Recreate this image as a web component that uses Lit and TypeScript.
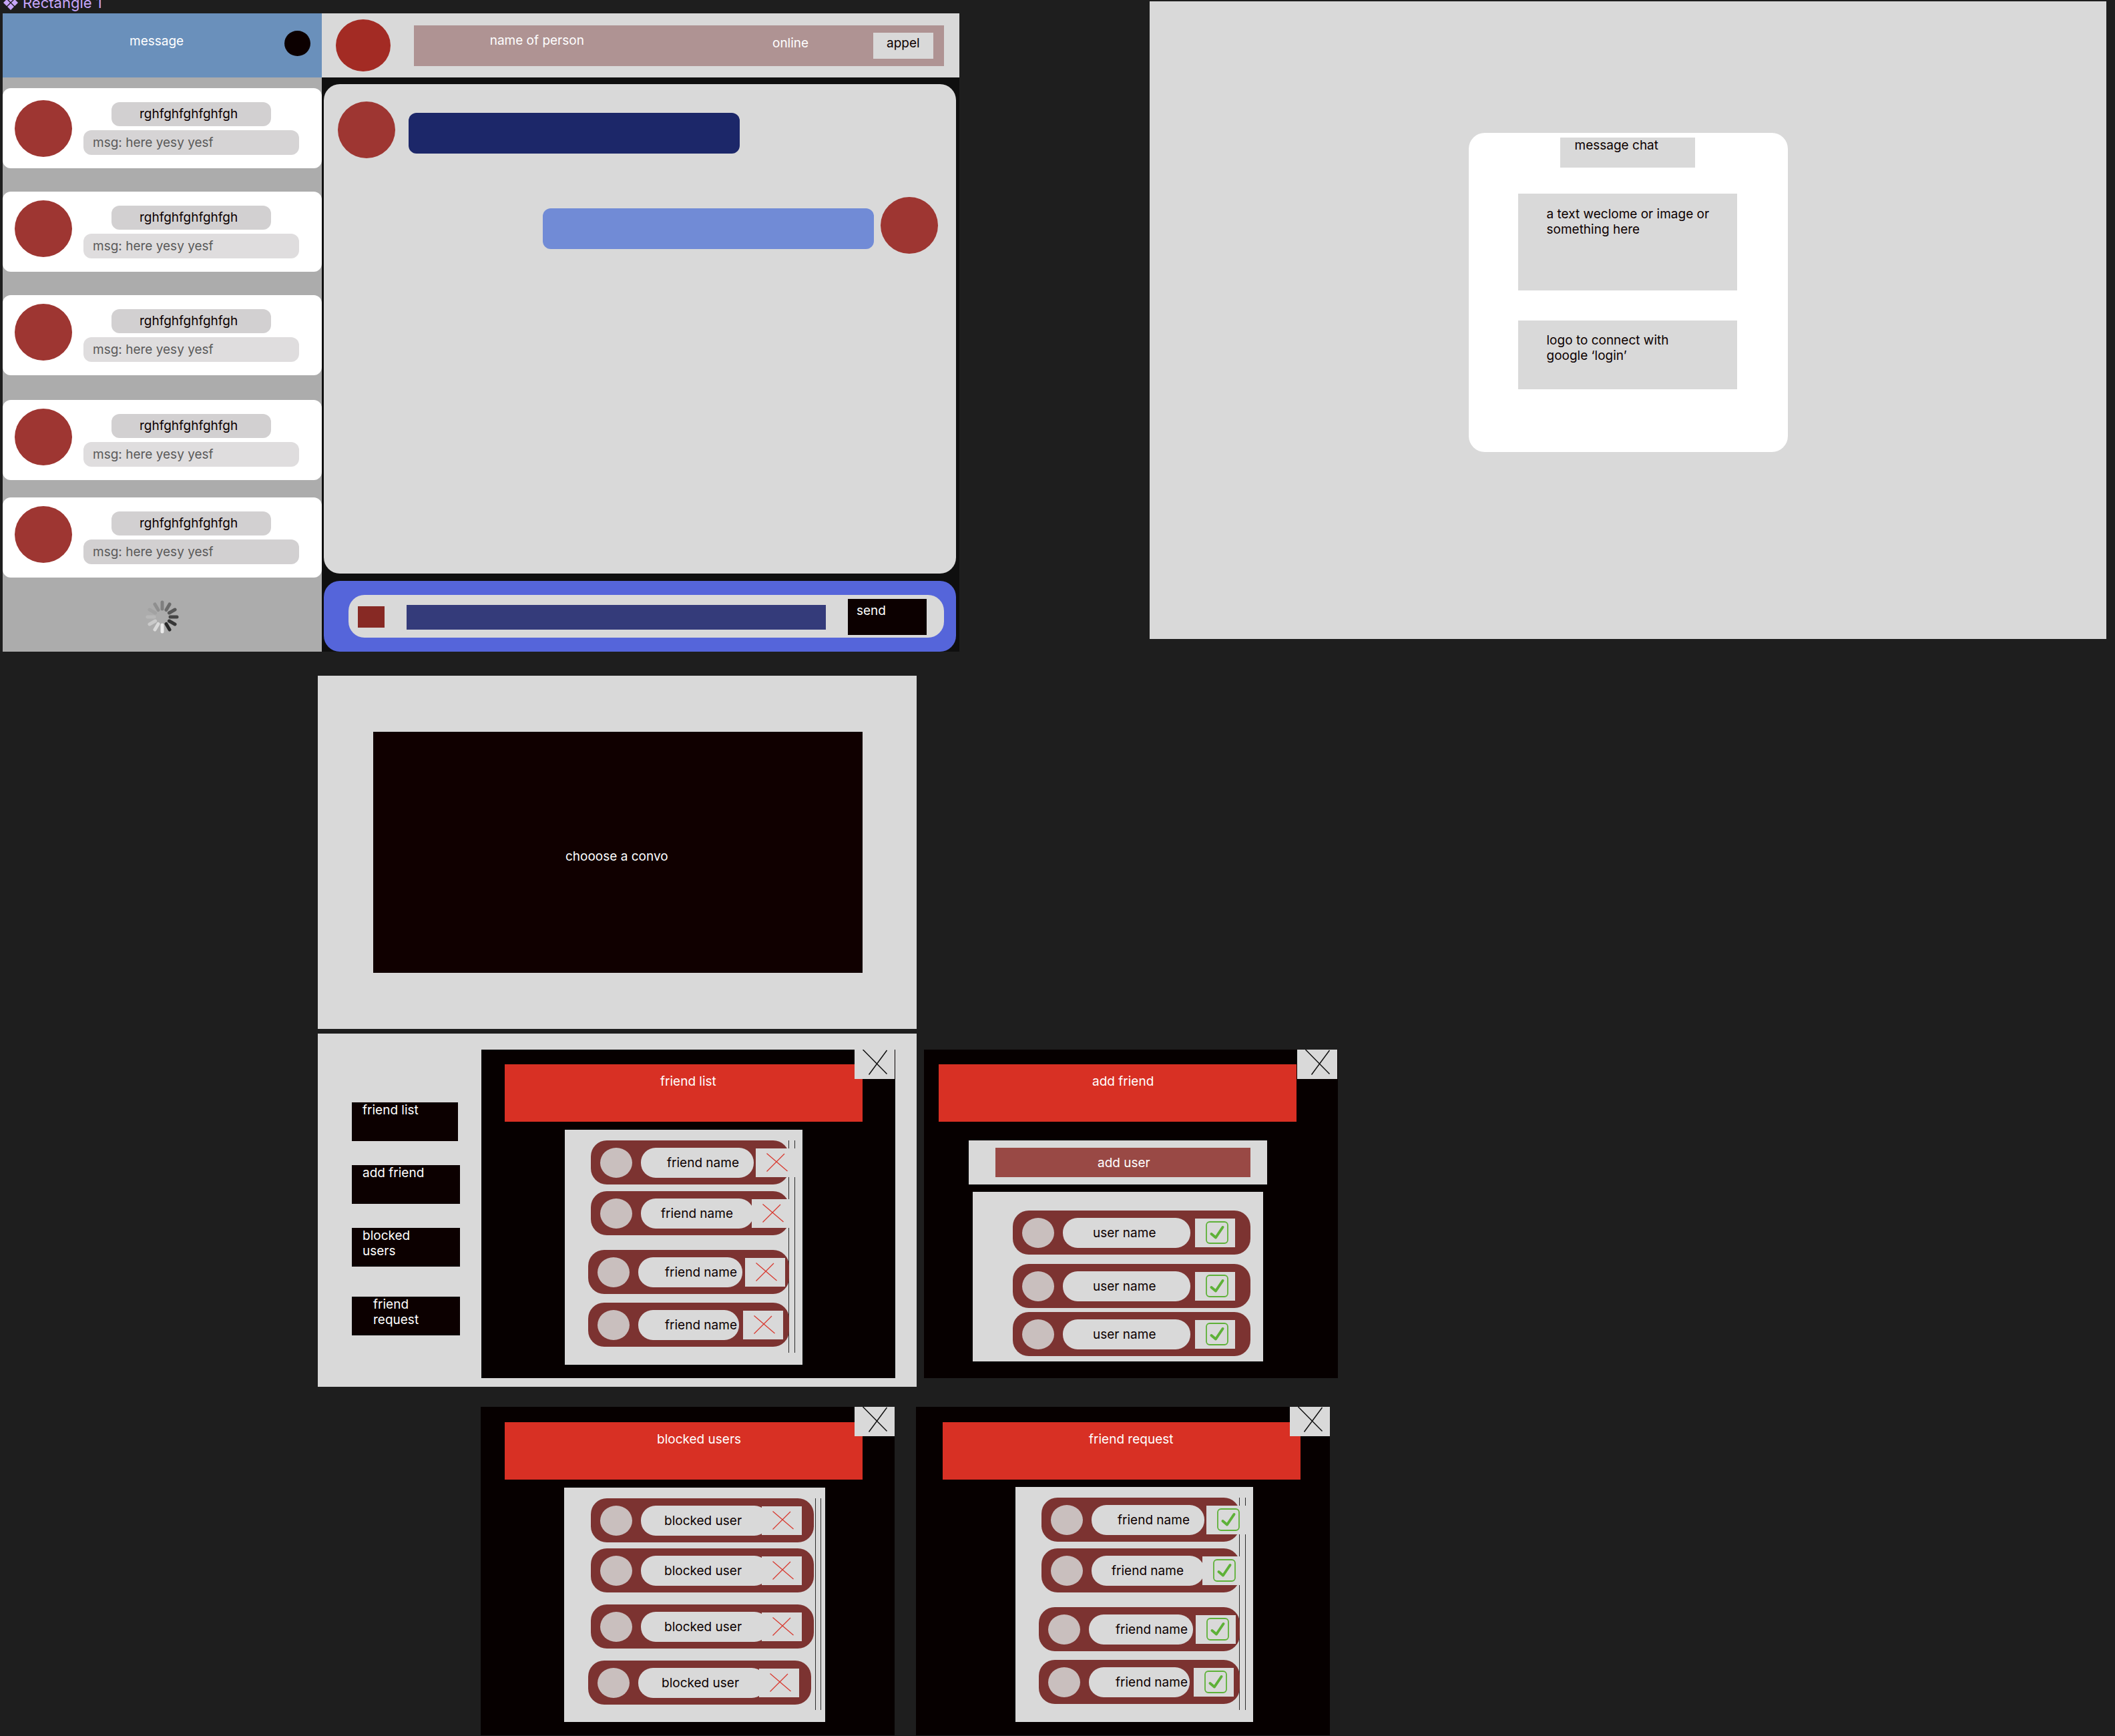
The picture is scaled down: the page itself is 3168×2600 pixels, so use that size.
import { LitElement, html, css, svg } from "lit";
import { customElement, property } from "lit/decorators.js";
import { classMap } from "lit/directives/class-map.js";

const base = css`
  :host {
    display: block;
    box-sizing: border-box;
    font-family: Inter, "Liberation Sans", sans-serif;
    font-size: 19px;
    line-height: 23px;
    color: #0c0000;
  }
  *,
  *::before,
  *::after {
    box-sizing: border-box;
  }
  h1,
  h2,
  p,
  ul {
    margin: 0;
    padding: 0;
    font: inherit;
    list-style: none;
  }
  button,
  input {
    margin: 0;
    padding: 0;
    border: 0;
    border-radius: 0;
    font: inherit;
    color: inherit;
    text-align: left;
  }
  svg {
    display: block;
  }
`;

const avatar = css`
  .avatar {
    flex: none;
    width: 86px;
    height: 85px;
    border-radius: 50%;
    background: #9e3632;
  }
`;

const SPOKES = [
  "#7f7f7f", "#6b6b6b", "#575757", "#454545", "#353535", "#2a2a2a",
  "#ebebeb", "#dadada", "#cacaca", "#b8b8b8", "#a2a2a2", "#8f8f8f",
];

const CONTACTS = ["mid", "light", "light", "light", "dark"];

@customElement("contact-sidebar")
export class ContactSidebar extends LitElement {
  static styles = [
    base,
    avatar,
    css`
      :host {
        background: #acacac;
      }
      .header {
        display: flex;
        height: 96px;
        padding: 26px 17px 0 190px;
        background: #6a90bb;
        color: #fff;
      }
      .title {
        flex: 1;
        padding-top: 4px;
      }
      .menu {
        width: 39px;
        height: 38px;
        border-radius: 50%;
        background: #0c0000;
      }
      .contacts {
        display: flex;
        flex-direction: column;
        gap: 35px;
        padding-top: 16px;
      }
      .contact {
        display: flex;
        gap: 17px;
        height: 120px;
        padding: 13px 34px 0 18px;
        border-radius: 12px;
        background: #fff;
      }
      .contact:first-child {
        align-items: center;
        padding-top: 0;
      }
      .contact:nth-child(4) {
        margin-top: 2px;
      }
      .contact:last-child {
        margin-top: -9px;
      }
      .lines {
        flex: 1;
        display: flex;
        flex-direction: column;
        gap: 6px;
        padding-top: 8px;
      }
      .contact:first-child .lines {
        padding-top: 0;
      }
      .name,
      .preview {
        border-radius: 12px;
      }
      .name {
        margin: 0 42px;
        padding: 6px 0 7px 42px;
        background: #d2d0d1;
      }
      .preview {
        padding: 7px 14px;
        background: #dfddde;
        color: #5a5a5a;
      }
      .mid .preview {
        background: #d6d4d5;
      }
      .dark .preview {
        background: #d2d0d1;
      }
      .spinner {
        width: 50px;
        height: 50px;
        margin: 34px auto 0;
      }
    `,
  ];

  render() {
    return html`
      <div class="header">
        <h2 class="title">message</h2>
        <button class="menu" aria-label="menu"></button>
      </div>
      <ul class="contacts">
        ${CONTACTS.map(
          (tone) => html`
            <li class=${classMap({ contact: true, [tone]: true })}>
              <div class="avatar"></div>
              <div class="lines">
                <p class="name">rghfghfghfghfgh</p>
                <p class="preview">msg: here yesy yesf</p>
              </div>
            </li>
          `,
        )}
      </ul>
      <svg class="spinner" viewBox="-25 -25 50 50" aria-hidden="true">
        ${SPOKES.map(
          (color, i) => svg`<line y1="-12" y2="-22" stroke=${color} stroke-width="5"
            stroke-linecap="round" transform="rotate(${i * 30})"></line>`,
        )}
      </svg>
    `;
  }
}

@customElement("chat-room")
export class ChatRoom extends LitElement {
  static styles = [
    base,
    avatar,
    css`
      :host {
        background: #0f0f0f;
      }
      .header {
        display: flex;
        align-items: center;
        gap: 35px;
        height: 96px;
        padding: 0 23px 0 21px;
        background: #d9d9d9;
      }
      .photo {
        flex: none;
        width: 82px;
        height: 78px;
        border-radius: 50%;
        background: #a32b24;
      }
      .bar {
        flex: 1;
        display: flex;
        align-items: flex-start;
        height: 61px;
        padding: 11px 16px 0 114px;
        background: #af9393;
        color: #fff;
      }
      .person {
        flex: 1;
      }
      .status {
        width: 151px;
        padding-top: 4px;
      }
      .call {
        display: flex;
        width: 90px;
        height: 39px;
        padding: 4px 0 0 20px;
        background: #d9d9d9;
        color: #0c0000;
      }
      .thread {
        display: flex;
        flex-direction: column;
        gap: 58px;
        height: 733px;
        margin: 10px 5px 11px 3px;
        padding: 26px 27px 0 21px;
        border-radius: 24px;
        background: #d9d9d9;
      }
      .message {
        display: flex;
        gap: 20px;
      }
      .own {
        flex-direction: row-reverse;
        gap: 10px;
      }
      .bubble {
        width: 496px;
        height: 61px;
        margin-top: 17px;
        border-radius: 12px;
        background: #1c2769;
      }
      .own .bubble {
        background: #718bd6;
      }
      .footer {
        height: 106px;
        margin: 0 5px 0 3px;
        padding: 21px 18px 21px 37px;
        border-radius: 24px;
        background: #5565da;
      }
      .composer {
        display: flex;
        align-items: center;
        gap: 33px;
        height: 64px;
        padding: 2px 26px 0 14px;
        border-radius: 24px;
        background: #d9d9d9;
      }
      .attach {
        width: 40px;
        height: 32px;
        background: #872924;
      }
      .text {
        flex: 1;
        min-width: 0;
        height: 37px;
        padding: 0 12px;
        background: #343b7a;
        color: #fff;
      }
      .send {
        display: flex;
        width: 118px;
        height: 54px;
        padding: 6px 0 0 13px;
        background: #0c0000;
        color: #fff;
      }
    `,
  ];

  render() {
    return html`
      <div class="header">
        <div class="photo"></div>
        <div class="bar">
          <h2 class="person">name of person</h2>
          <p class="status">online</p>
          <button class="call">appel</button>
        </div>
      </div>
      <div class="thread">
        <div class="message">
          <div class="avatar"></div>
          <div class="bubble"></div>
        </div>
        <div class="message own">
          <div class="avatar"></div>
          <div class="bubble"></div>
        </div>
      </div>
      <div class="footer">
        <form class="composer">
          <button class="attach" type="button" aria-label="attach"></button>
          <input class="text" type="text" aria-label="message text" />
          <button class="send" type="button">send</button>
        </form>
      </div>
    `;
  }
}

@customElement("login-screen")
export class LoginScreen extends LitElement {
  static styles = [
    base,
    css`
      :host {
        height: 955px;
        padding-top: 197px;
        background: #d9d9d9;
      }
      .card {
        display: flex;
        flex-direction: column;
        align-items: center;
        width: 478px;
        height: 478px;
        margin: 0 auto;
        padding: 7px 76px 0 74px;
        border-radius: 24px;
        background: #fff;
      }
      .title {
        width: 202px;
        height: 45px;
        padding-left: 22px;
        background: #d9d9d9;
      }
      .welcome,
      .login {
        width: 100%;
        padding: 19px 36px 0 43px;
        background: #d9d9d9;
      }
      .welcome {
        height: 145px;
        margin: 39px 0 45px;
      }
      .login {
        display: flex;
        height: 103px;
        padding-top: 18px;
        padding-right: 90px;
      }
    `,
  ];

  render() {
    return html`
      <div class="card">
        <h1 class="title">message chat</h1>
        <p class="welcome">a text weclome or image or something here</p>
        <button class="login">logo to connect with google ‘login’</button>
      </div>
    `;
  }
}

type Mark = "remove" | "accept";

@customElement("person-row")
export class PersonRow extends LitElement {
  @property() name = "";
  @property() mark: Mark = "remove";

  static styles = [
    base,
    css`
      :host {
        position: relative;
        display: flex;
        align-items: center;
        height: 66px;
        padding-left: 14px;
        border-radius: 24px;
        background: #7c3331;
      }
      .photo {
        flex: none;
        width: 48px;
        height: 45px;
        margin-right: 13px;
        border-radius: 50%;
        background: #c9bfbe;
      }
      .name {
        flex: none;
        display: flex;
        align-items: center;
        width: var(--name-width, 169px);
        height: 45px;
        padding-left: var(--name-indent, 39px);
        border-radius: 22px;
        background: #d9d9d9;
        white-space: nowrap;
      }
      .action {
        flex: none;
        display: flex;
        align-items: center;
        width: 60px;
        height: 43px;
        margin-left: var(--action-gap, 3px);
        padding-left: 16px;
        background: #d9d9d9;
      }
    `,
  ];

  render() {
    const cross = html`<svg width="32" height="28" viewBox="0 0 32 28" fill="none" stroke="#d83a30" stroke-width="1.3">
      <path d="M.5.5 31.5 27M27 1 .5 27.500"></path>
    </svg>`;
    const check = html`<svg width="34" height="34" viewBox="0 0 34 34" fill="none" stroke="#5eb138">
      <rect x="1" y="1" width="32" height="32" rx="5" stroke-width="1.800"></rect>
      <path d="M8.500 19 15 24.500 25.500 9" stroke-width="4" stroke-linecap="round" stroke-linejoin="round"></path>
    </svg>`;
    const accept = this.mark === "accept";
    return html`
      <span class="photo"></span>
      <span class="name">${this.name}</span>
      <button class="action" aria-label=${this.mark}>${accept ? check : cross}</button>
    `;
  }
}

@customElement("people-panel")
export class PeoplePanel extends LitElement {
  @property() heading = "";
  @property({ reflect: true }) kind = "friends";

  static styles = [
    base,
    css`
      :host {
        position: relative;
        min-height: 492px;
        padding: 22px 0 20px;
        background: #060000;
      }
      .title {
        width: 536px;
        height: 86px;
        margin-left: 35px;
        padding: 14px 0 0 233px;
        background: #d83024;
        color: #fff;
      }
      .close {
        position: absolute;
        top: 0;
        right: 1px;
        width: 60px;
        height: 44px;
        background: #d9d9d9;
      }
      .list {
        position: relative;
        display: flex;
        flex-direction: column;
        width: 356px;
        margin: 12px 0 0 125px;
        padding: 16px 20px 27px 39px;
        background: #d9d9d9;
      }
      .scroll {
        position: absolute;
        top: 16px;
        bottom: 18px;
        right: 11px;
        width: 10px;
        border: solid #2a2a2a;
        border-width: 0 1px;
      }

      .staggered .row:nth-of-type(2) {
        --name-indent: 30px;
        --action-gap: -3px;
        margin-top: 10px;
      }
      .staggered .row:nth-of-type(3) {
        --name-width: 156px;
        --name-indent: 40px;
        --action-gap: 4px;
        margin: 22px 0 13px -4px;
      }
      .staggered .row:nth-of-type(4) {
        --name-width: 151px;
        --name-indent: 40px;
        --action-gap: 6px;
        margin-left: -4px;
      }

      :host([kind="blocked"]),
      :host([kind="requests"]) {
        padding: 23px 0 18px;
      }
      :host([kind="blocked"]) .title {
        margin-left: 36px;
        padding-left: 228px;
      }
      :host([kind="blocked"]) .close,
      :host([kind="requests"]) .close {
        right: 0;
      }
      .blocked {
        width: 391px;
        padding: 16px 17px 26px 40px;
      }
      .blocked .scroll {
        right: 6px;
        width: 9px;
      }
      .blocked .row {
        --name-width: 192px;
        --name-indent: 35px;
        --action-gap: -11px;
      }
      .blocked .row:nth-of-type(2) {
        margin-top: 9px;
      }
      .blocked .row:nth-of-type(3) {
        margin: 18px 0;
      }
      .blocked .row:nth-of-type(4) {
        margin: 0 4px 0 -4px;
      }

      :host([kind="requests"]) .title {
        margin-left: 40px;
        padding-left: 219px;
      }
      :host([kind="requests"]) .list {
        margin: 11px 0 0 149px;
      }

      :host([kind="add"]) .title {
        margin-left: 22px;
        padding-left: 230px;
      }
      .search {
        width: 447px;
        height: 66px;
        margin: 28px 0 0 67px;
        padding: 11px 25px 11px 40px;
        background: #d9d9d9;
      }
      .add-user {
        display: flex;
        align-items: center;
        width: 100%;
        height: 44px;
        padding-left: 153px;
        background: #994945;
        color: #fff;
      }
      .add {
        width: 435px;
        margin: 11px 0 5px 73px;
        padding: 28px 19px 8px 60px;
      }
      .add .row {
        --name-width: 191px;
        --name-indent: 45px;
        --action-gap: 7px;
      }
      .add .row:nth-of-type(2) {
        margin: 14px 0 6px;
      }
    `,
  ];

  render() {
    const adding = this.kind === "add";
    const blocked = this.kind === "blocked";
    const name = adding ? "user name" : blocked ? "blocked user" : "friend name";
    const mark: Mark = adding || this.kind === "requests" ? "accept" : "remove";
    const rows = Array.from({ length: adding ? 3 : 4 });
    return html`
      <h2 class="title">${this.heading}</h2>
      <button class="close" aria-label="close">
        <svg width="60" height="44" viewBox="0 0 60 44" fill="none" stroke="#111" stroke-width="1.500">
          <path d="M12.500 0 48.500 36.500M48.500 1 21.500 37.500"></path>
        </svg>
      </button>
      ${adding
        ? html`<div class="search"><button class="add-user">add user</button></div>`
        : null}
      <div class=${classMap({ list: true, add: adding, blocked, staggered: !adding && !blocked })}>
        ${adding ? null : html`<div class="scroll"></div>`}
        ${rows.map(() => html`<person-row class="row" name=${name} mark=${mark}></person-row>`)}
      </div>
    `;
  }
}

@customElement("app-root")
export class AppRoot extends LitElement {
  static styles = [
    base,
    css`
      :host {
        min-height: 2600px;
        overflow: hidden;
        background: #1e1e1e;
      }
      .top {
        display: grid;
        grid-template-columns: 1fr 1fr;
        gap: 285px;
        align-items: start;
        padding: 0 13px 0 4px;
      }
      .label {
        display: flex;
        align-items: flex-end;
        gap: 7px;
        height: 20px;
        padding-bottom: 2px;
        font-size: 22px;
        line-height: 27px;
        color: #c7a6fb;
      }
      .label svg {
        flex: none;
        margin: 0 0 3px 1px;
      }
      .chat {
        display: grid;
        grid-template-columns: 1fr 2fr;
        height: 956px;
      }
      .login {
        margin-top: 2px;
      }
      .stack {
        display: flex;
        flex-direction: column;
        align-items: flex-start;
        gap: 7px;
        padding: 36px 0 0 476px;
      }
      .empty {
        width: 897px;
        padding: 84px 81px 84px 83px;
        background: #d9d9d9;
      }
      .prompt {
        height: 361px;
        padding: 175px 0 0 288px;
        background: #100000;
        color: #fff;
      }
      .pair {
        display: flex;
        align-items: flex-start;
        gap: 11px;
      }
      .manager {
        display: flex;
        justify-content: space-between;
        width: 897px;
        height: 529px;
        padding: 24px 32px 13px 51px;
        background: #d9d9d9;
      }
      .nav {
        display: flex;
        flex-direction: column;
        gap: 36px;
        width: 162px;
        padding-top: 79px;
      }
      .tab {
        display: flex;
        height: 58px;
        padding: 0 40px 0 16px;
        background: #0c0000;
        color: #fff;
      }
      .tab:first-child {
        margin-right: 3px;
      }
      .tab:last-child {
        margin-top: 9px;
        padding-left: 32px;
      }
      .panel {
        width: 620px;
      }
      .offset {
        margin-top: 24px;
      }
      .bottom {
        display: flex;
        gap: 32px;
        padding: 30px 0 0 720px;
      }
    `,
  ];

  render() {
    return html`
      <main>
        <section class="top">
          <div>
            <div class="label">
              <svg width="22" height="22" viewBox="0 0 22 22" fill="currentColor" aria-hidden="true">
                <path d="M11 0 16 5 11 10 6 5ZM5 6 10 11 5 16 0 11ZM17 6 22 11 17 16 12 11ZM11 12 16 17 11 22 6 17Z"></path>
              </svg>
              <span>Rectangle 1</span>
            </div>
            <div class="chat">
              <contact-sidebar></contact-sidebar>
              <chat-room></chat-room>
            </div>
          </div>
          <login-screen class="login"></login-screen>
        </section>
        <section class="stack">
          <div class="empty"><p class="prompt">chooose a convo</p></div>
          <div class="pair">
            <div class="manager">
              <nav class="nav">
                <button class="tab">friend list</button>
                <button class="tab">add friend</button>
                <button class="tab">blocked users</button>
                <button class="tab">friend request</button>
              </nav>
              <people-panel class="panel" kind="friends" heading="friend list"></people-panel>
            </div>
            <people-panel class="panel offset" kind="add" heading="add friend"></people-panel>
          </div>
        </section>
        <section class="bottom">
          <people-panel class="panel" kind="blocked" heading="blocked users"></people-panel>
          <people-panel class="panel" kind="requests" heading="friend request"></people-panel>
        </section>
      </main>
    `;
  }
}
